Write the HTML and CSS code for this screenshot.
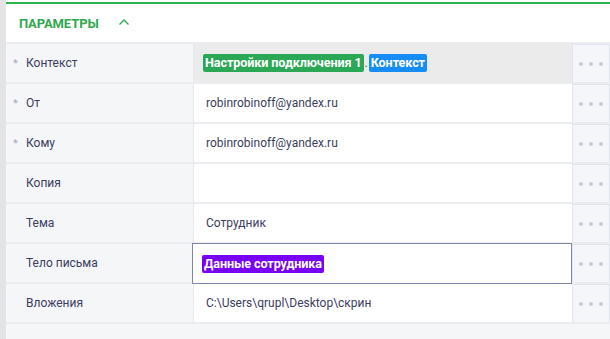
FILE: index.html
```html
<!DOCTYPE html>
<html lang="ru">
<head>
    <meta charset="UTF-8">
    <meta name="viewport" content="width=device-width, initial-scale=1.0">
    <title>Параметры</title>
    <link rel="stylesheet" href="styles.css">
</head>
<body>
    <div class="page">
        <div class="strip"></div>
        <div class="panel">
            <div class="header">
                <span class="title">Параметры</span>
                <svg class="chevron" width="12" height="8" viewBox="0 0 12 8">
                    <path d="M1.5 6.5 L6 2 L10.5 6.5" fill="none" stroke="#2fa84f" stroke-width="1.4"/>
                </svg>
            </div>
            <div class="rows">
                <div class="row">
                    <div class="label"><span class="req">*</span>Контекст</div>
                    <div class="value selected">
                        <span class="badge green">Настройки подключения 1</span><span class="dot-sep">.</span><span class="badge blue">Контекст</span>
                    </div>
                    <div class="more"><i></i><i></i><i></i></div>
                </div>
                <div class="row">
                    <div class="label"><span class="req">*</span>От</div>
                    <div class="value">robinrobinoff@yandex.ru</div>
                    <div class="more"><i></i><i></i><i></i></div>
                </div>
                <div class="row">
                    <div class="label"><span class="req">*</span>Кому</div>
                    <div class="value">robinrobinoff@yandex.ru</div>
                    <div class="more"><i></i><i></i><i></i></div>
                </div>
                <div class="row">
                    <div class="label"><span class="req"></span>Копия</div>
                    <div class="value"></div>
                    <div class="more"><i></i><i></i><i></i></div>
                </div>
                <div class="row">
                    <div class="label"><span class="req"></span>Тема</div>
                    <div class="value">Сотрудник</div>
                    <div class="more"><i></i><i></i><i></i></div>
                </div>
                <div class="row">
                    <div class="label"><span class="req"></span>Тело письма</div>
                    <div class="value focused"><span class="badge purple">Данные сотрудника</span></div>
                    <div class="more"><i></i><i></i><i></i></div>
                </div>
                <div class="row">
                    <div class="label"><span class="req"></span>Вложения</div>
                    <div class="value">C:\Users\qrupl\Desktop\скрин</div>
                    <div class="more"><i></i><i></i><i></i></div>
                </div>
            </div>
        </div>
    </div>
</body>
</html>
```

FILE: styles.css
```css
body {
    margin: 0;
    background-color: #f5f6f8;
    font-family: Roboto, "Noto Sans", sans-serif;
    font-size: 12px;
    color: #3c3d5e;
}
.page {
    display: flex;
    min-height: 339px;
}
.strip {
    width: 6px;
    background-color: #e4e4e4;
}
.panel {
    flex: 1;
    padding-top: 2px;
    background: linear-gradient(#fff 2px, transparent 2px);
}
.header {
    display: flex;
    align-items: center;
    height: 38px;
    padding-left: 13px;
    background-color: #fff;
    border-top: 2px solid #2db44f;
    border-bottom: 2px solid #eaecf0;
}
.title {
    text-transform: uppercase;
    font-weight: 700;
    font-size: 13px;
    color: #2fa84f;
    letter-spacing: -0.1px;
}
.chevron {
    margin-left: 19px;
    margin-top: -2px;
}
.row {
    display: grid;
    grid-template-columns: 187px 1fr 38px;
    height: 38px;
    border-bottom: 2px solid #eaecf0;
}
.label {
    display: flex;
    align-items: center;
    background-color: #f5f6f8;
}
.req {
    width: 20px;
    padding-left: 7px;
    box-sizing: border-box;
    color: #a5a9b8;
    font-size: 11px;
}
.value {
    display: flex;
    align-items: center;
    padding-left: 12px;
    background-color: #fff;
    border-left: 1px solid #e8eaee;
}
.value.selected {
    background-color: #ebebeb;
    padding-left: 9px;
}
.value.focused {
    border: 1px solid #7f86aa;
    margin: -1px 0 -2px -1px;
    padding-left: 9px;
}
.badge {
    display: inline-block;
    height: 18px;
    line-height: 18px;
    padding: 0 2px;
    border-radius: 2px;
    color: #fff;
    font-weight: 700;
    font-size: 12.6px;
    letter-spacing: -0.1px;
}
.badge.green {
    background-color: #2aa855;
}
.badge.blue {
    background-color: #168cf6;
}
.badge.purple {
    background-color: #7700f5;
}
.dot-sep {
    padding: 0 1px;
    color: #555;
}
.more {
    display: flex;
    align-items: center;
    justify-content: center;
    gap: 6px;
    background-color: #f5f6fa;
    border: 1px solid #e1e5ef;
    border-bottom: 0;
}
.more i {
    width: 4px;
    height: 4px;
    border-radius: 50%;
    background-color: #c6c9db;
}
```
